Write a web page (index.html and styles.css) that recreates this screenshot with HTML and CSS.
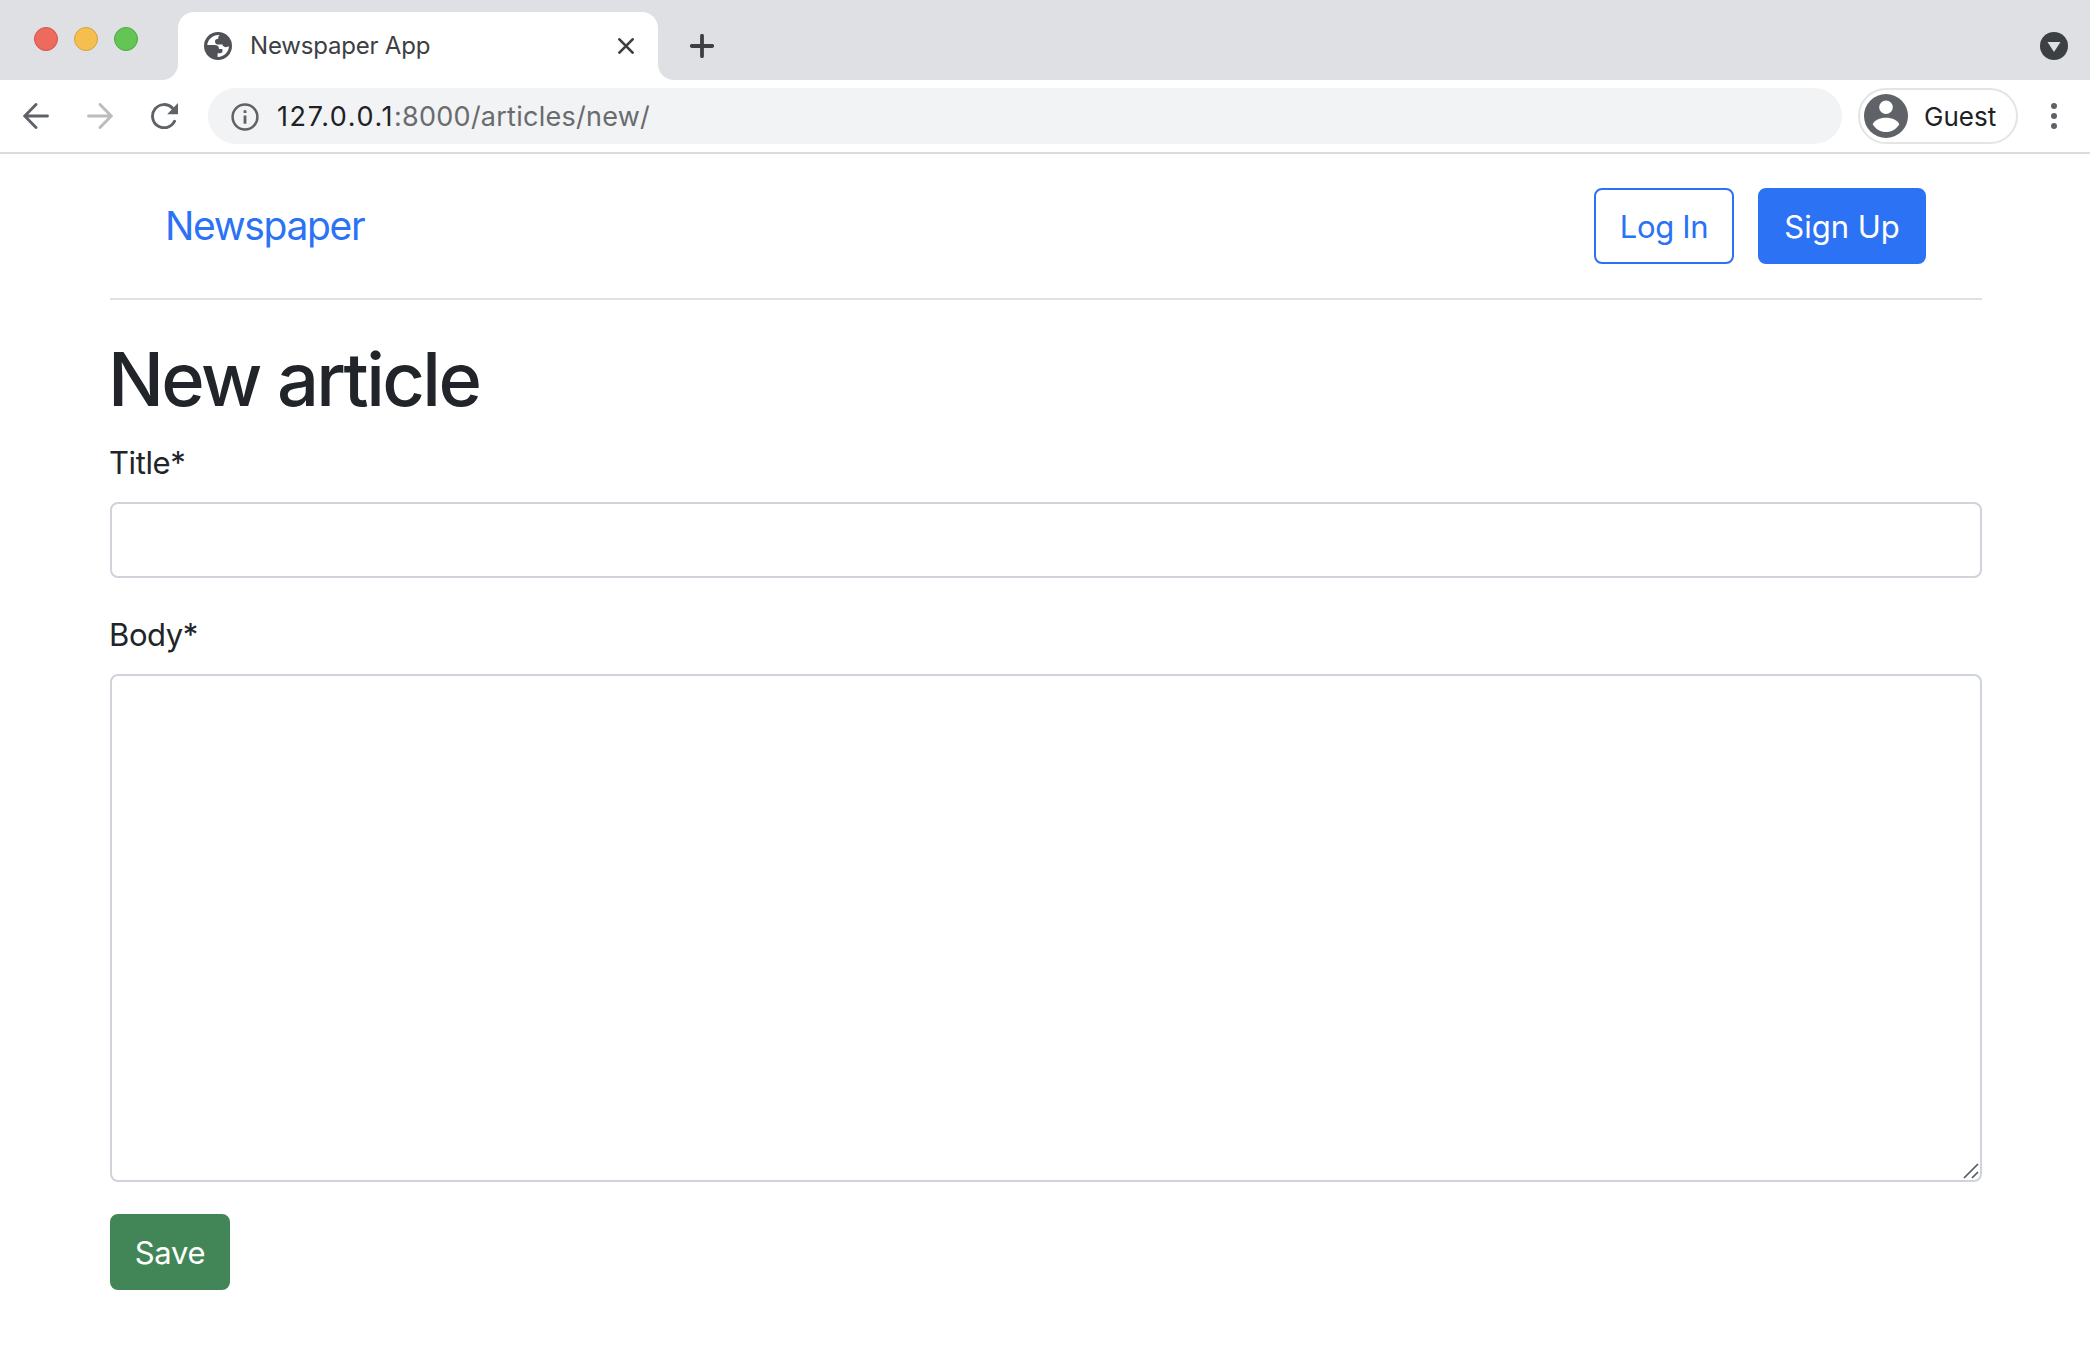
FILE: index.html
```html
<!DOCTYPE html>
<html lang="en">
<head>
<meta charset="utf-8">
<title>Newspaper App</title>
<link rel="stylesheet" href="styles.css">
</head>
<body>
<div class="tab-strip">
  <div class="lights"><span class="light red"></span><span class="light yellow"></span><span class="light green"></span></div>
  <div class="tab">
    <svg class="globe" viewBox="0 0 28 28"><circle cx="14" cy="14" r="14" fill="#505257"/><path d="M15.6 3.1C9.5 2.4 4 7 3.2 13H10.500C13.500 13 15 14.700 15 16.900H18.400V19.600C18.400 20.600 17.400 21.200 16 21.200H13.600V24.900C19.900 25 25 20 24.900 14C24 15 22.300 15.400 20.800 15C19.300 14.600 18.600 13.700 18.500 12.500H14.700C12.200 12.500 11 11.300 11 9.400C11 7.600 12.200 6.700 14.300 6.700V5.200C14.300 4.400 14.800 3.700 15.600 3.100Z" fill="#fff"/></svg>
    <span class="tab-title">Newspaper App</span>
    <svg class="tab-close" viewBox="0 0 16 16"><path d="M1.400 1.400L14.600 14.600M14.600 1.400L1.400 14.600" stroke="#3c4043" stroke-width="2.700" stroke-linecap="round"/></svg>
  </div>
  <svg class="new-tab" viewBox="0 0 24 24"><path d="M12 1.800V22.200M1.800 12H22.200" stroke="#3c4043" stroke-width="3.800" stroke-linecap="round"/></svg>
  <svg class="tab-search" viewBox="0 0 28 28"><circle cx="14" cy="14" r="14" fill="#3c4043"/><path d="M7.500 10H20.500L14 20Z" fill="#dee0e4"/></svg>
</div>
<div class="toolbar">
  <svg class="nav-icon back" viewBox="0 0 26 26"><path d="M24.500 13H2M13 1.500L1.700 13L13 24.500" fill="none" stroke="#5f6368" stroke-width="2.900" stroke-linecap="round" stroke-linejoin="miter"/></svg>
  <svg class="nav-icon forward" viewBox="0 0 26 26"><path d="M1.500 13H24M13 1.500L24.300 13L13 24.500" fill="none" stroke="#babcbe" stroke-width="2.900" stroke-linecap="round"/></svg>
  <svg class="nav-icon reload" viewBox="0 0 28 26"><path d="M23.600 18.200A11.600 11.600 0 1 1 21.300 4.900" fill="none" stroke="#5f6368" stroke-width="2.900" stroke-linecap="round"/><path d="M27 0V11.300H16.200Z" fill="#5f6368"/></svg>
  <div class="address">
    <svg class="info" viewBox="0 0 28 28"><circle cx="14" cy="14" r="12.400" fill="none" stroke="#5f6368" stroke-width="2.500"/><path d="M12.600 7.300H15.400V10H12.600ZM12.600 12.600H15.400V20.700H12.600Z" fill="#5f6368"/></svg>
    <span class="url"><span class="host">127.0.0.1</span>:8000/articles/new/</span>
  </div>
  <div class="profile">
    <svg class="avatar" viewBox="0 0 44 44"><circle cx="22" cy="22" r="22" fill="#5f6368"/><circle cx="22" cy="13.300" r="6.800" fill="#fff"/><path d="M8.700 30.200C10.500 26.300 15.500 23.700 22 23.700S33.500 26.300 35.300 30.200C32.400 35.200 27.300 38 22 38S11.600 35.200 8.700 30.200Z" fill="#fff"/></svg>
    <span class="profile-name">Guest</span>
  </div>
  <svg class="menu" viewBox="0 0 6 26"><circle cx="3" cy="3" r="3"/><circle cx="3" cy="13" r="3"/><circle cx="3" cy="23" r="3"/></svg>
</div>
<div class="container">
  <header class="site-header">
    <a class="brand">Newspaper</a>
    <div class="actions"><a class="btn login"><span>Log In</span></a><a class="btn signup"><span>Sign Up</span></a></div>
  </header>
  <main>
    <h1>New article</h1>
    <form>
      <label class="title-label" for="title">Title*</label>
      <input class="field" id="title" type="text">
      <label class="body-label" for="body">Body*</label>
      <div class="area-wrap">
        <textarea class="field area" id="body"></textarea>
        <svg class="grip" viewBox="0 0 16 16"><path d="M1 15L15 1M9 15L15 9" stroke="#58595b" stroke-width="1.700"/></svg>
      </div>
      <button class="btn save" type="button"><span>Save</span></button>
    </form>
  </main>
</div>
</body>
</html>
```
FILE: styles.css
```css
* { box-sizing: border-box; }
body { margin: 0; height: 1348px; overflow: hidden; background: #fff; color: #212529; font-family: Inter, "Liberation Sans", sans-serif; font-weight: 430; }
svg { display: block; flex: none; }

.tab-strip { display: flex; height: 80px; background: #dee0e4; padding-right: 22px; }
.lights { display: flex; gap: 16px; width: 178px; padding: 27px 0 0 34px; }
.light { width: 24px; height: 24px; border-radius: 50%; border: 1px solid; }
.red { background: #ed6a5e; border-color: #d35247; }
.yellow { background: #f5bf4f; border-color: #d8a040; }
.green { background: #62c554; border-color: #4fa73f; }
.tab { position: relative; display: flex; align-items: center; width: 480px; height: 68px; margin-top: 12px; padding: 0 24px 0 26px; background: #fff; border-radius: 16px 16px 0 0; }
.tab::before, .tab::after { content: ""; position: absolute; bottom: 0; width: 16px; height: 16px; }
.tab::before { left: -16px; background: radial-gradient(circle at 0 0, transparent 15.500px, #fff 16.500px); }
.tab::after { right: -16px; background: radial-gradient(circle at 100% 0, transparent 15.500px, #fff 16.500px); }
.globe { width: 28px; height: 28px; }
.tab-title { margin-left: 18px; padding-bottom: 2px; font-size: 24px; letter-spacing: -0.200px; color: #3c4043; }
.tab-close { width: 16px; height: 16px; margin-left: auto; }
.new-tab { width: 24px; height: 24px; margin: 34px 0 0 32px; }
.tab-search { width: 28px; height: 28px; margin: 32px 0 0 auto; }

.toolbar { display: flex; align-items: center; height: 74px; padding: 0 33px 2px 23px; border-bottom: 2px solid #dadce0; }
.nav-icon { width: 26px; height: 26px; margin-top: 1px; }
.forward { margin-left: 38px; }
.reload { width: 28px; margin-left: 38px; }
.address { display: flex; align-items: center; width: 1634px; height: 56px; margin: 2px 0 0 29px; padding-left: 22px; border-radius: 28px; background: #f1f3f4; }
.info { width: 28px; height: 28px; margin: 1px 0 0 1px; }
.url { margin-left: 18px; font-size: 27px; letter-spacing: 0.250px; color: #696b6e; white-space: nowrap; }
.host { letter-spacing: 1.600px; color: #202124; }
.profile { display: flex; align-items: center; width: 160px; height: 56px; margin: 2px 0 0 16px; padding-left: 4px; border: 2px solid #e4e4e5; border-radius: 28px; }
.avatar { width: 44px; height: 44px; }
.profile-name { margin-left: 16px; padding-top: 1px; font-size: 26px; color: #202124; }
.menu { width: 6px; height: 26px; margin: 2px 0 0 auto; fill: #5f6368; }

.container { width: 1872px; margin: 0 auto 0 110px; }
.site-header { display: flex; align-items: center; justify-content: space-between; height: 146px; padding: 0 56px 0 54px; border-bottom: 2px solid #dee2e6; }
.brand { padding: 0 0 2px 1px; font-size: 39px; letter-spacing: -1.350px; color: #2b72f5; }
.actions { display: flex; gap: 24px; }
.btn { display: flex; align-items: center; justify-content: center; height: 76px; padding: 2px 0 0; border: 2px solid #2b72f5; border-radius: 8px; font: 430 31px/48px Inter, "Liberation Sans", sans-serif; letter-spacing: -0.300px; white-space: nowrap; }
.login { width: 140px; color: #2b72f5; }
.signup { width: 168px; color: #fff; background: #2b72f5; letter-spacing: 0; }
h1 { margin: 32px 0 16px -2px; padding-top: 2px; height: 90px; font-size: 74px; line-height: 90px; font-weight: 550; letter-spacing: -2.600px; }
label { display: block; height: 48px; padding-top: 1px; margin: 0 0 16px -1px; font-size: 31px; line-height: 48px; letter-spacing: -0.400px; }
.field { display: block; width: 100%; height: 76px; margin: 0 0 32px; padding: 12px 24px; border: 2px solid #ced4da; border-radius: 8px; background: #fff; outline: none; resize: none; font: 31px Inter, sans-serif; }
.area { height: 508px; }
.area-wrap { position: relative; }
.grip { position: absolute; right: 3px; bottom: 3px; width: 16px; height: 16px; }
.save { width: 120px; color: #fff; background: #428657; border-color: #428657; }
```
